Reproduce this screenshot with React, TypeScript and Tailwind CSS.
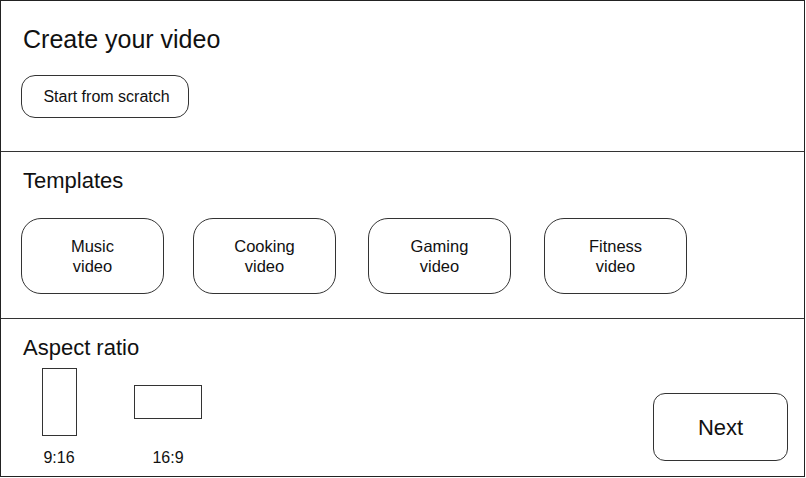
const TEMPLATES = [
  { top: 'Music', gap: 'ml-0' },
  { top: 'Cooking', gap: 'ml-[29px]' },
  { top: 'Gaming', gap: 'ml-[32px]' },
  { top: 'Fitness', gap: 'ml-[33px]' },
]

function RatioOption({ label, box }: { label: string; box: string }) {
  return (
    <div className="flex w-[68px] flex-col items-center">
      <div className="flex h-[68px] items-center justify-center">
        <div className={`border border-[#333] bg-white ${box}`} />
      </div>
      <p className="mt-[14px] text-[16px] leading-none">{label}</p>
    </div>
  )
}

export default function App() {
  return (
    <div
      className="flex h-[477px] w-[805px] flex-col border border-[#222] bg-white text-[#111]"
      style={{ fontFamily: '"Liberation Sans", Arial, sans-serif' }}
    >
      <section className="h-[151px] border-b border-[#333] pl-[20px] pt-[26px]">
        <h1 className="ml-[2px] text-[25px] leading-none">Create your video</h1>
        <button
          type="button"
          className="mt-[23px] flex h-[43px] w-[168px] items-center justify-center rounded-[14px] border border-[#333] pl-[3px] text-[16px]"
        >
          Start from scratch
        </button>
      </section>

      <section className="h-[167px] border-b border-[#333] pl-[20px] pt-[18px]">
        <h2 className="ml-[2px] text-[22px] leading-none">Templates</h2>
        <div className="mt-[26px] flex">
          {TEMPLATES.map((t) => (
            <button
              key={t.top}
              type="button"
              className={`flex h-[76px] w-[143px] flex-col items-center justify-center rounded-[20px] border border-[#333] text-[16.5px] leading-[20px] ${t.gap}`}
            >
              <span>{t.top}</span>
              <span>video</span>
            </button>
          ))}
        </div>
      </section>

      <section className="flex flex-1 flex-col pl-[20px] pr-[16px] pt-[18px]">
        <h2 className="ml-[2px] text-[22px] leading-none">Aspect ratio</h2>
        <div className="mt-[9px] flex items-end justify-between">
          <div className="ml-[4px] flex gap-[41px]">
            <RatioOption label="9:16" box="h-[68px] w-[35px]" />
            <RatioOption label="16:9" box="h-[34px] w-[68px]" />
          </div>
          <button
            type="button"
            className="mb-[5px] flex h-[68px] w-[135px] items-center justify-center rounded-[12px] border border-[#333] text-[22px]"
          >
            Next
          </button>
        </div>
      </section>
    </div>
  )
}
